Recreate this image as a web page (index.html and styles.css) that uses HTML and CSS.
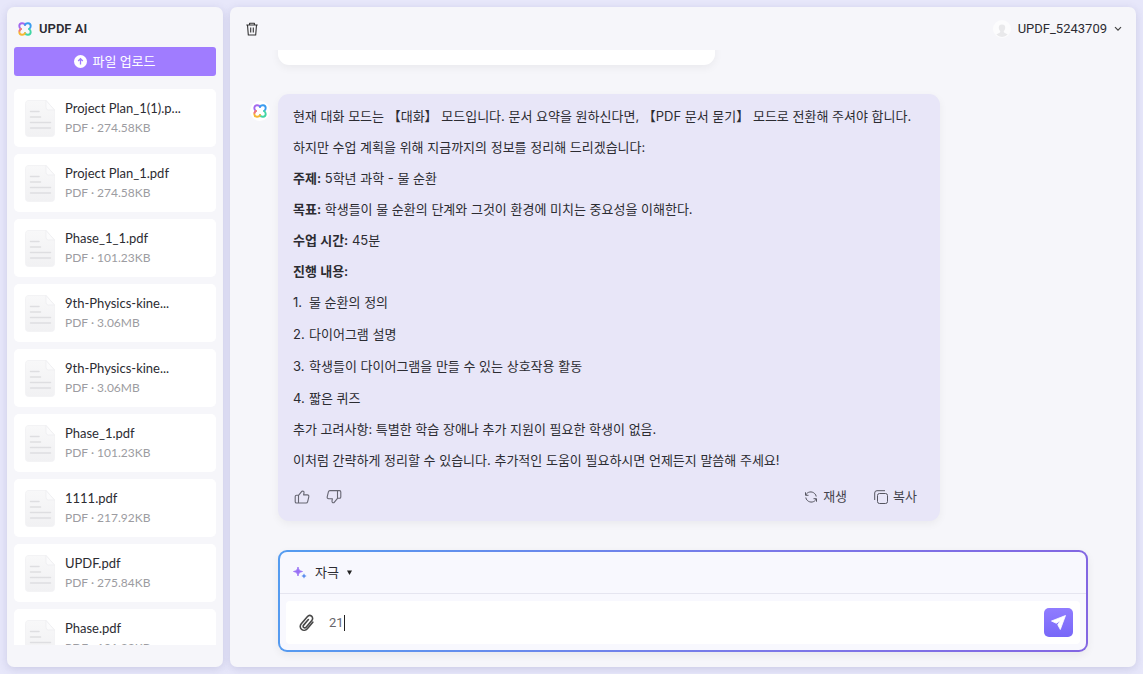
FILE: index.html
```html
<!DOCTYPE html>
<html lang="ko">
<head>
    <meta charset="UTF-8">
    <meta name="viewport" content="width=device-width, initial-scale=1.0">
    <title>UPDF AI</title>
    <link rel="stylesheet" href="styles.css">
</head>
<body>
    <svg class="sprite" aria-hidden="true">
        <defs>
            <linearGradient id="fold" x1="0" y1="0" x2="0" y2="1">
                <stop offset="0" stop-color="#f8f8f9"/>
                <stop offset="1" stop-color="#f1f1f3"/>
            </linearGradient>
            <symbol id="doc" viewBox="0 0 30 37">
                <path d="M3 .5h18L29.500 10v23.500a3 3 0 0 1-3 3H3.500a3 3 0 0 1-3-3V3.500a3 3 0 0 1 2.500-3z" fill="url(#fold)" stroke="#f3f3f5"/>
                <path d="M21 .5V7.500a2.500 2.500 0 0 0 2.500 2.500h6z" fill="#fbfbfc" stroke="#ededef" stroke-width=".7"/>
                <path d="M5.500 11.500H14M5.500 17H15.500M5.500 22.500h20M5.500 28h20" stroke="#dedee1" stroke-width="1.500" stroke-linecap="round"/>
            </symbol>
            <symbol id="logo" viewBox="0 0 14 14">
                <g fill="none" stroke-width="1.900" stroke-linecap="round">
                    <path d="M7 2.900C6 .7 1.500.5 1.300 3.900c0 1.500.7 2.500 1.600 3.100" stroke="#a368ee"/>
                    <path d="M7 2.900C8 .7 12.500.5 12.700 3.900c0 1.500-.7 2.500-1.600 3.100" stroke="#3a9cf0"/>
                    <path d="M11.100 7c.9.600 1.600 1.600 1.600 3.100-.2 3.400-4.700 3.200-5.700 1" stroke="#41d6a4"/>
                    <path d="M2.900 7c-.9.600-1.600 1.600-1.600 3.100.2 3.400 4.700 3.200 5.700 1" stroke="#f7b733"/>
                    <path d="M1.500 8.900c.2-.9.800-1.500 1.400-1.900" stroke="#f0708c"/>
                </g>
            </symbol>
        </defs>
    </svg>

    <div class="app">
        <aside class="sidebar">
            <div class="brand">
                <svg class="logo"><use href="#logo"/></svg>
                <span>UPDF AI</span>
            </div>
            <button class="upload-btn">
                <svg width="13" height="13" viewBox="0 0 13 13"><circle cx="6.500" cy="6.500" r="6.500" fill="#fff"/><path d="M6.500 9.500V3.800M4.200 6l2.300-2.300L8.800 6" fill="none" stroke="#a07cff" stroke-width="1.300"/></svg>
                <span>파일 업로드</span>
            </button>
            <ul class="files">
                <li><a class="file" href="#"><svg class="doc"><use href="#doc"/></svg><span class="file-text"><span class="file-name">Project Plan_1(1).p...</span><span class="file-meta">PDF · 274.58KB</span></span></a></li>
                <li><a class="file" href="#"><svg class="doc"><use href="#doc"/></svg><span class="file-text"><span class="file-name">Project Plan_1.pdf</span><span class="file-meta">PDF · 274.58KB</span></span></a></li>
                <li><a class="file" href="#"><svg class="doc"><use href="#doc"/></svg><span class="file-text"><span class="file-name">Phase_1_1.pdf</span><span class="file-meta">PDF · 101.23KB</span></span></a></li>
                <li><a class="file" href="#"><svg class="doc"><use href="#doc"/></svg><span class="file-text"><span class="file-name">9th-Physics-kine...</span><span class="file-meta">PDF · 3.06MB</span></span></a></li>
                <li><a class="file" href="#"><svg class="doc"><use href="#doc"/></svg><span class="file-text"><span class="file-name">9th-Physics-kine...</span><span class="file-meta">PDF · 3.06MB</span></span></a></li>
                <li><a class="file" href="#"><svg class="doc"><use href="#doc"/></svg><span class="file-text"><span class="file-name">Phase_1.pdf</span><span class="file-meta">PDF · 101.23KB</span></span></a></li>
                <li><a class="file" href="#"><svg class="doc"><use href="#doc"/></svg><span class="file-text"><span class="file-name">1111.pdf</span><span class="file-meta">PDF · 217.92KB</span></span></a></li>
                <li><a class="file" href="#"><svg class="doc"><use href="#doc"/></svg><span class="file-text"><span class="file-name">UPDF.pdf</span><span class="file-meta">PDF · 275.84KB</span></span></a></li>
                <li><a class="file" href="#"><svg class="doc"><use href="#doc"/></svg><span class="file-text"><span class="file-name">Phase.pdf</span><span class="file-meta">PDF · 101.23KB</span></span></a></li>
            </ul>
        </aside>

        <main class="panel">
            <header class="topbar">
                <button class="icon-btn" aria-label="삭제">
                    <svg width="12" height="14" viewBox="0 0 12 14" fill="none" stroke="#333" stroke-width="1.100"><path d="M.3 3h11.400M3.600 3V1.200h4.800V3M1.500 3l.8 10h7.400l.8-10M4.700 5.500v5M7.300 5.500v5" stroke-linejoin="round"/></svg>
                </button>
                <button class="account">
                    <svg width="18" height="18" viewBox="0 0 18 18"><circle cx="9" cy="9" r="9" fill="#fcfcfd"/><path d="M9 4.500a3.200 3.200 0 0 0-3.200 3.300c0 1.500.7 2.700 1.500 3.300L7 12.500l-3.700 2A7.800 7.800 0 0 0 9 17a7.800 7.800 0 0 0 5.700-2.500l-3.700-2-.3-1.400c.8-.6 1.500-1.800 1.500-3.300A3.200 3.200 0 0 0 9 4.500z" fill="#e9e9eb"/></svg>
                    <span>UPDF_5243709</span>
                    <svg width="8" height="6" viewBox="0 0 8 6" fill="none" stroke="#444" stroke-width="1.200"><path d="M1 1.200l3 3 3-3"/></svg>
                </button>
            </header>

            <div class="chat">
                <div class="user-message"></div>
                <div class="message">
                    <div class="avatar"><svg class="logo"><use href="#logo"/></svg></div>
                    <div class="bubble">
                        <div class="answer">
                            <p>현재 대화 모드는 【대화】 모드입니다. 문서 요약을 원하신다면, 【PDF 문서 묻기】 모드로 전환해 주셔야 합니다.</p>
                            <p>하지만 수업 계획을 위해 지금까지의 정보를 정리해 드리겠습니다:</p>
                            <p><strong>주제:</strong> 5학년 과학 - 물 순환</p>
                            <p><strong>목표:</strong> 학생들이 물 순환의 단계와 그것이 환경에 미치는 중요성을 이해한다.</p>
                            <p><strong>수업 시간:</strong> 45분</p>
                            <p><strong>진행 내용:</strong></p>
                            <ol>
                                <li>물 순환의 정의</li>
                                <li>다이어그램 설명</li>
                                <li>학생들이 다이어그램을 만들 수 있는 상호작용 활동</li>
                                <li>짧은 퀴즈</li>
                            </ol>
                            <p>추가 고려사항: 특별한 학습 장애나 추가 지원이 필요한 학생이 없음.</p>
                            <p>이처럼 간략하게 정리할 수 있습니다. 추가적인 도움이 필요하시면 언제든지 말씀해 주세요!</p>
                        </div>
                        <div class="actions">
                            <button class="icon-btn" aria-label="좋아요">
                                <svg width="16" height="16" viewBox="0 0 16 16" fill="none" stroke="#666672" stroke-width="1.100" stroke-linejoin="round"><path d="M4.500 6.300v7.700H2.500A1.300 1.300 0 0 1 1.200 12.700V7.600a1.300 1.300 0 0 1 1.300-1.300h2L8 2.200c1.500-.4 2.200.5 2 1.700l-.4 2h3.700c1.200 0 1.700.8 1.500 1.900l-1.200 5c-.2.700-.7 1.200-1.500 1.200H4.500"/></svg>
                            </button>
                            <button class="icon-btn" aria-label="싫어요">
                                <svg width="16" height="16" viewBox="0 0 16 16" fill="none" stroke="#666672" stroke-width="1.100" stroke-linejoin="round"><path d="M11.500 9.300V1.600h2A1.300 1.300 0 0 1 14.800 2.900V8a1.300 1.300 0 0 1-1.300 1.300h-2L8 13.600c-1.500.4-2.200-.5-2-1.700l.4-2.200H2.700C1.500 9.700 1 8.900 1.200 7.800l1.200-5c.2-.7.7-1.200 1.500-1.200h7.600"/></svg>
                            </button>
                            <button class="text-btn push">
                                <svg width="14" height="14" viewBox="0 0 14 14" fill="none" stroke="#555560" stroke-width="1"><path d="M1.500 2.300v3h3M1.800 5C3.300 1.600 7.900.9 10.600 3.500c1 .9 1.500 1.900 1.600 3M12.500 11.700v-3h-3M12.200 9c-1.500 3.400-6.100 4.100-8.800 1.500-1-.9-1.500-1.900-1.600-3"/></svg>
                                <span>재생</span>
                            </button>
                            <button class="text-btn">
                                <svg width="14" height="14" viewBox="0 0 14 14" fill="none" stroke="#555560" stroke-width="1"><rect x="3.500" y="3.500" width="10" height="10" rx="2"/><path d="M.7 10V3A2.300 2.300 0 0 1 3 .7h8"/></svg>
                                <span>복사</span>
                            </button>
                        </div>
                    </div>
                </div>
            </div>

            <form class="composer">
                <div class="composer-head">
                    <svg width="14" height="14" viewBox="0 0 14 14"><path d="M5 1c.6 3 1.500 3.900 4.500 4.500C6.500 6.100 5.600 7 5 10 4.400 7 3.500 6.100.5 5.500 3.500 4.900 4.400 4 5 1z" fill="#9870f5" stroke="#9870f5" stroke-width=".8"/><path d="M11 7.800c.3 1.500.7 1.900 2.200 2.200-1.500.3-1.900.7-2.200 2.200-.3-1.500-.7-1.900-2.200-2.200 1.500-.3 1.900-.7 2.200-2.200z" fill="#4a82ee" stroke="#4a82ee" stroke-width=".4"/></svg>
                    <select class="mode" aria-label="대화 모드">
                        <option>자극</option>
                    </select>
                    <svg width="5" height="5" viewBox="0 0 5 5"><path d="M0 .5h5L2.500 5z" fill="#222"/></svg>
                </div>
                <div class="composer-body">
                    <button type="button" class="icon-btn" aria-label="파일 첨부">
                        <svg width="16" height="18" viewBox="0 0 16 18" fill="none" stroke="#484848" stroke-width="1.600" stroke-linecap="round"><path d="M13.800 8.200l-5.500 6.500c-1.600 1.900-4.100 2-5.700.7s-1.900-3.800-.3-5.700l6-7c1.200-1.400 3.100-1.500 4.300-.5s1.400 2.900.2 4.300l-5.700 6.700c-.7.800-1.700.9-2.400.3s-.8-1.600-.1-2.400l4.800-5.600"/></svg>
                    </button>
                    <label class="prompt">
                        <input type="text" class="prompt-input" value="21" aria-label="메시지">
                        <span class="cursor"></span>
                    </label>
                    <button type="button" class="send-btn" aria-label="보내기">
                        <svg width="17" height="17" viewBox="0 0 17 17" fill="#fff"><path d="M15.500 1.500L1.500 7l4.800 2.300L10.500 6.500 7.700 10.700 10.300 15.500z" stroke="#fff" stroke-width=".8" stroke-linejoin="round"/></svg>
                    </button>
                </div>
            </form>
        </main>
    </div>
</body>
</html>
```
FILE: styles.css
```css
* {
    box-sizing: border-box;
}

body {
    margin: 0;
    background-color: #e7e7fa;
    font-family: Roboto, "Noto Sans CJK KR", sans-serif;
    font-size: 13px;
    line-height: 20px;
    color: #2c2c32;
}

button,
input,
select {
    padding: 0;
    border: none;
    background: none;
    font: inherit;
    color: inherit;
}

button {
    display: flex;
    align-items: center;
    cursor: pointer;
}

svg {
    display: block;
    flex: none;
}

.sprite {
    position: absolute;
    width: 0;
    height: 0;
}

.app {
    display: flex;
    gap: 7px;
    height: 100vh;
    padding: 7px;
}

.sidebar,
.panel {
    display: flex;
    flex-direction: column;
    background-color: #f6f6fa;
    border-radius: 7px;
    box-shadow: 0 2px 8px rgba(80, 80, 140, 0.18);
}

.sidebar {
    flex: none;
    width: 216px;
    padding: 12px 7px 22px;
}

.brand {
    display: flex;
    align-items: center;
    gap: 7px;
    padding: 0 4px;
    margin-bottom: 8px;
    font-weight: 600;
}

.logo {
    width: 14px;
    height: 14px;
}

.upload-btn {
    flex: none;
    justify-content: center;
    gap: 5px;
    height: 29px;
    border-radius: 3px;
    background-color: #a07cff;
    color: white;
}

.files {
    display: flex;
    flex-direction: column;
    flex: 1;
    gap: 7px;
    min-height: 0;
    margin: 13px 0 0;
    padding: 0;
    overflow: hidden;
    list-style: none;
    font-family: Lato, sans-serif;
}

.file {
    display: flex;
    align-items: center;
    gap: 10px;
    height: 58px;
    padding: 0 11px;
    border-radius: 5px;
    background-color: white;
    color: #2c2c32;
    text-decoration: none;
}

.doc {
    width: 30px;
    height: 37px;
}

.file-text {
    display: flex;
    flex-direction: column;
    white-space: nowrap;
}

.file-meta {
    font-size: 12px;
    color: #9c9ca1;
}

.panel {
    flex: 1;
    min-width: 0;
    padding-bottom: 15px;
}

.topbar {
    display: flex;
    align-items: center;
    justify-content: space-between;
    flex: none;
    height: 43px;
    padding: 0 14px 0 16px;
}

.account {
    gap: 7px;
}

.chat {
    display: flex;
    flex-direction: column;
    justify-content: flex-end;
    flex: 1;
    gap: 29px;
    min-height: 0;
    padding: 0 48px 29px 20px;
    overflow: hidden;
}

.user-message {
    flex: none;
    width: 437px;
    height: 60px;
    margin-left: 28px;
    border-radius: 11px;
    background-color: white;
    box-shadow: 0 3px 8px rgba(0, 0, 0, 0.05);
}

.message {
    display: flex;
    gap: 8px;
}

.avatar {
    display: flex;
    align-items: center;
    justify-content: center;
    flex: none;
    width: 20px;
    height: 20px;
    margin-top: 7px;
    border-radius: 50%;
    background-color: white;
}

.bubble {
    flex: 1;
    max-width: 662px;
    padding: 12px 15px 14px;
    border-radius: 11px;
    background-color: #e8e6f8;
    box-shadow: 0 3px 8px rgba(0, 0, 0, 0.05);
}

.answer {
    display: flex;
    flex-direction: column;
    gap: 11px;
    font-family: Inter, "Noto Sans CJK KR", sans-serif;
}

.answer p {
    margin: 0;
}

.answer strong {
    font-weight: 600;
}

.answer ol {
    display: flex;
    flex-direction: column;
    gap: 12px;
    margin: 0;
    padding: 0;
    list-style: none;
    counter-reset: step;
}

.answer li {
    display: flex;
    counter-increment: step;
}

.answer li::before {
    content: counter(step) ".";
    width: 16px;
}

.actions {
    display: flex;
    align-items: center;
    gap: 16px;
    height: 20px;
    margin-top: 17px;
    padding: 0 8px 0 1px;
}

.text-btn {
    gap: 5px;
    color: #44444c;
}

.push {
    margin-left: auto;
    margin-right: 11px;
}

.composer {
    flex: none;
    margin: 0 48px;
    border: 2px solid transparent;
    border-radius: 9px;
    background: linear-gradient(#f8f8fe, #f8f8fe) padding-box,
                linear-gradient(100deg, #549cf0, #7b78e8 60%, #8366e2) border-box;
    box-shadow: 0 3px 8px rgba(0, 0, 0, 0.06);
}

.composer-head {
    display: flex;
    align-items: center;
    gap: 8px;
    height: 42px;
    padding: 0 13px;
    border-bottom: 1px solid #e5e5f0;
}

.mode {
    appearance: none;
}

.composer-body {
    display: flex;
    align-items: center;
    gap: 14px;
    height: 43px;
    margin: 7px 6px 6px;
    padding: 0 7px 0 13px;
    border-radius: 4px;
    background-color: white;
}

.prompt {
    display: flex;
    align-items: center;
    flex: 1;
    cursor: text;
}

.prompt-input {
    field-sizing: content;
    outline: none;
    color: #66666c;
}

.cursor {
    width: 1px;
    height: 16px;
    background-color: #222;
}

.send-btn {
    justify-content: center;
    width: 29px;
    height: 29px;
    border-radius: 5px;
    background: linear-gradient(#907cff, #7868f8);
}
```
